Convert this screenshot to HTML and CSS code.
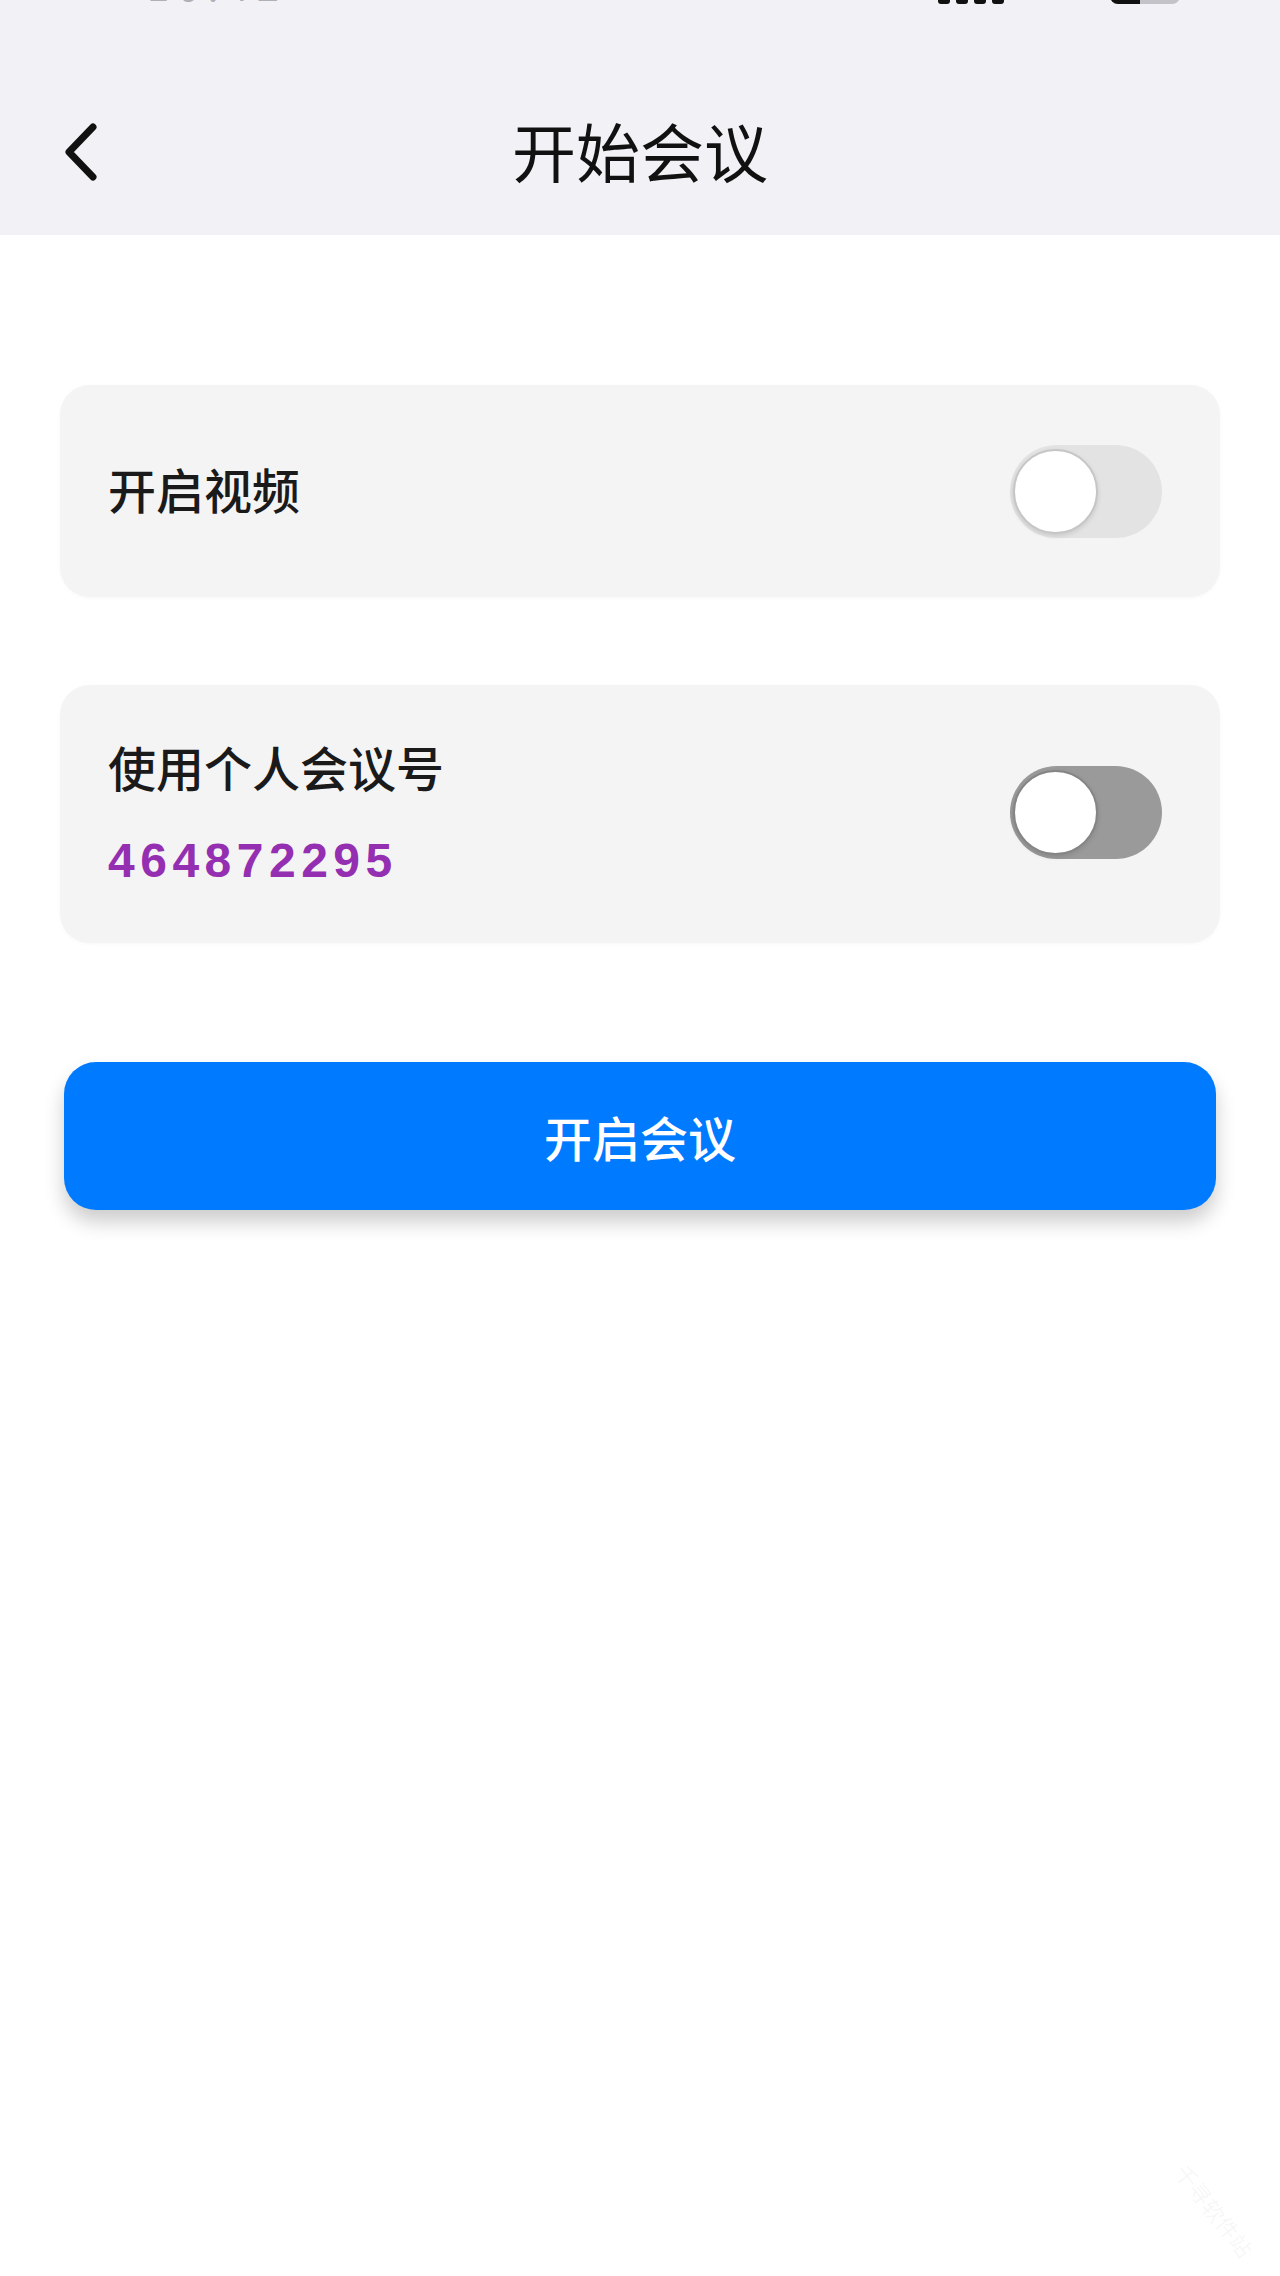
FILE: index.html
```html
<!DOCTYPE html>
<html lang="zh-CN">
<head>
    <meta charset="UTF-8">
    <title>开始会议</title>
    <link rel="stylesheet" href="styles.css">
</head>
<body>
<div class="page">
    <header class="top-bar">
        <div class="status-bar">
            <div class="status-left">
                <span class="status-time">10:42</span>
            </div>
            <div class="status-right">
                <span class="signal"><i></i><i></i><i></i><i></i></span>
                <span class="battery"><span class="battery-level"></span></span>
            </div>
        </div>
        <div class="nav-bar">
            <div class="nav-left">
                <!-- кнопка назад -->
                <svg class="back-icon" width="40" height="64" viewBox="0 0 40 64">
                    <polyline points="30,8 6,33 30,58" fill="none" stroke="#111" stroke-width="7" stroke-linecap="round" stroke-linejoin="round"/>
                </svg>
            </div>
            <h1 class="nav-title">开始会议</h1>
            <div class="nav-right"></div>
        </div>
    </header>

    <main class="content">
        <div class="option-card">
            <div class="option-label option-label-single">开启视频</div>
            <div class="switch"><span class="knob"></span></div>
        </div>

        <div class="option-card option-card-tall">
            <div class="option-text">
                <div class="option-label">使用个人会议号</div>
                <div class="meeting-number">464872295</div>
            </div>
            <div class="switch switch-dark"><span class="knob"></span></div>
        </div>

        <button class="start-button">开启会议</button>
    </main>

    <div class="watermark">千寻软件站</div>
</div>
</body>
</html>
```

FILE: styles.css
```css
body {
    margin: 0;
    background-color: #ffffff;
    font-family: "Noto Sans CJK SC", "Noto Sans", sans-serif;
    color: #1a1a1a;
}

.page {
    position: relative;
    min-height: 2276px;
    overflow: hidden;
}

.top-bar {
    background-color: #f2f2f6;
    height: 235px;
}

/* status bar, only its lower edge is visible */
.status-bar {
    height: 4px;
    overflow: hidden;
    display: flex;
    justify-content: space-between;
    align-items: flex-end;
    padding: 0 100px 0 147px;
}

.status-time {
    display: block;
    font-size: 40px;
    line-height: 40px;
    color: #b0b0b4;
    letter-spacing: 8px;
}

.status-right {
    display: flex;
    align-items: flex-end;
    gap: 106px;
}

.signal {
    display: flex;
    align-items: flex-end;
    gap: 6px;
}

.signal i {
    display: block;
    width: 12px;
    height: 20px;
    border-radius: 3px;
    background-color: #111;
}

.battery {
    display: block;
    width: 70px;
    height: 30px;
    border-radius: 8px;
    background-color: #c4c4c8;
    overflow: hidden;
}

.battery-level {
    display: block;
    width: 30px;
    height: 100%;
    background-color: #111;
}

.nav-bar {
    display: grid;
    grid-template-columns: 1fr auto 1fr;
    align-items: center;
    height: 110px;
    margin-top: 90px;
}

.nav-left {
    display: flex;
    align-items: center;
    padding-left: 63px;
}

.back-icon {
    display: block;
    margin-top: 4px;
}

.nav-title {
    margin: 0;
    font-size: 64px;
    font-weight: 400;
    line-height: 110px;
    color: #111;
}

.content {
    display: flex;
    flex-direction: column;
    gap: 88px;
    padding: 150px 60px 0;
}

.option-card {
    display: flex;
    align-items: center;
    justify-content: space-between;
    background-color: #f4f4f5;
    border-radius: 30px;
    padding: 60px 58px 59px 48px;
    box-shadow: 0 1px 4px rgba(0, 0, 0, 0.03);
}

.option-card-tall {
    padding-top: 51px;
    padding-bottom: 54px;
}

.option-text {
    display: flex;
    flex-direction: column;
    gap: 37px;
}

.option-label {
    font-size: 48px;
    font-weight: 500;
    line-height: 60px;
    color: #1a1a1a;
}

.option-label-single {
    padding-bottom: 8px;
}

.meeting-number {
    font-family: "Liberation Sans", Arial, sans-serif;
    font-size: 48px;
    font-weight: bold;
    line-height: 56px;
    letter-spacing: 5.5px;
    color: #952fb1;
}

.switch {
    display: flex;
    align-items: center;
    width: 152px;
    height: 93px;
    border-radius: 47px;
    background-color: #e3e3e3;
    box-sizing: border-box;
    padding-left: 3px;
}

.switch-dark {
    background-color: #9a9a9a;
}

.knob {
    display: block;
    width: 85px;
    height: 85px;
    border-radius: 50%;
    background-color: #ffffff;
    box-sizing: border-box;
    border: 2px solid #c6c6c6;
    box-shadow: 0 2px 5px rgba(0, 0, 0, 0.12);
}

.switch-dark .knob {
    border-color: #858585;
}

.start-button {
    margin: 31px 4px 0;
    height: 148px;
    border: none;
    border-radius: 32px;
    background-color: #007aff;
    color: #ffffff;
    font-family: "Noto Sans CJK SC", "Noto Sans", sans-serif;
    font-size: 48px;
    font-weight: 500;
    box-shadow: 0 12px 20px rgba(0, 0, 0, 0.2);
}

.watermark {
    position: absolute;
    right: 10px;
    bottom: 50px;
    font-size: 22px;
    color: rgba(0, 0, 0, 0.05);
    transform: rotate(52deg);
    transform-origin: center;
}
```
